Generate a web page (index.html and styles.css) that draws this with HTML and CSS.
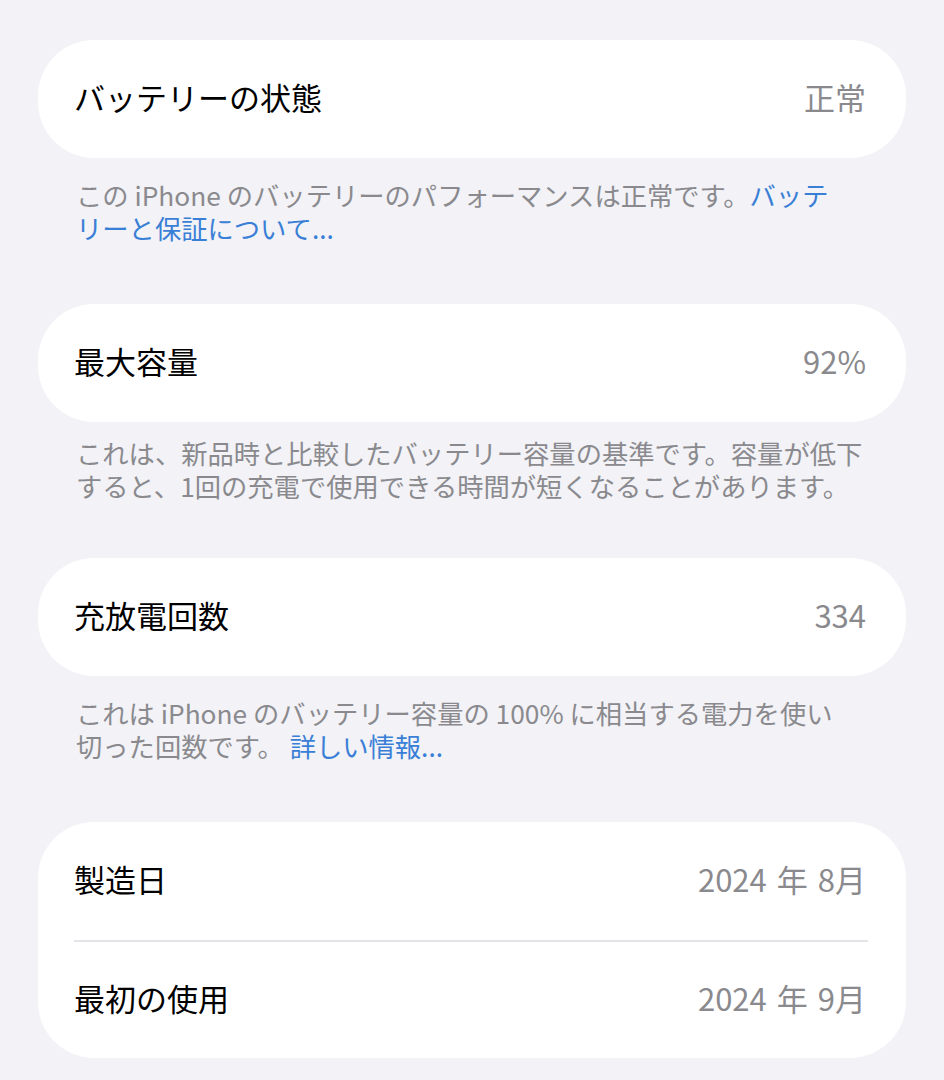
FILE: index.html
```html
<!DOCTYPE html>
<html lang="ja">
<head>
  <meta charset="UTF-8" />
  <meta name="viewport" content="width=device-width, initial-scale=1.0"/>
  <title>バッテリーの状態と充電</title>
  <link rel="stylesheet" href="styles.css">
</head>
<body>

  <main class="settings">

    <!-- Battery health -->
    <section class="group">
      <div class="card">
        <div class="row">
          <span class="label">バッテリーの状態</span>
          <span class="value">正常</span>
        </div>
      </div>
      <p class="note">この iPhone のバッテリーのパフォーマンスは正常です。<a href="#">バッテ<br>リーと保証について...</a></p>
    </section>

    <!-- Maximum capacity -->
    <section class="group group-tight">
      <div class="card">
        <div class="row">
          <span class="label">最大容量</span>
          <span class="value">92%</span>
        </div>
      </div>
      <p class="note">これは、新品時と比較したバッテリー容量の基準です。容量が低下<br>すると、1回の充電で使用できる時間が短くなることがあります。</p>
    </section>

    <!-- Cycle count -->
    <section class="group">
      <div class="card">
        <div class="row">
          <span class="label">充放電回数</span>
          <span class="value">334</span>
        </div>
      </div>
      <p class="note">これは iPhone のバッテリー容量の 100% に相当する電力を使い<br>切った回数です。 <a href="#">詳しい情報...</a></p>
    </section>

    <!-- Dates -->
    <section class="group">
      <div class="card">
        <div class="row">
          <span class="label">製造日</span>
          <span class="value">2024<span class="gap"></span>年<span class="gap"></span>8月</span>
        </div>
        <div class="row">
          <span class="label">最初の使用</span>
          <span class="value">2024<span class="gap"></span>年<span class="gap"></span>9月</span>
        </div>
      </div>
    </section>

  </main>

</body>
</html>
```

FILE: styles.css
```css
* {
  box-sizing: border-box;
  margin: 0;
  padding: 0;
}
body {
  background-color: #f2f2f7;
  font-family: "Noto Sans CJK JP", "Noto Sans", sans-serif;
  padding: 40px 38px 0;
}
.group {
  margin-bottom: 60px;
}
.card {
  background: #fff;
  border-radius: 56px;
  padding: 0 38px 0 36px;
}
.row {
  height: 118px;
  display: flex;
  align-items: center;
  justify-content: space-between;
  font-size: 31px;
  padding: 0 2px 6px 0;
}
.row + .row {
  border-top: 2px solid #e4e4e8;
}
.label {
  color: #000;
}
.value {
  color: #8a8a8e;
}
.gap {
  display: inline-block;
  width: 10px;
}
.note {
  margin-top: 20px;
  padding: 0 30px 0 38px;
  font-size: 26.3px;
  line-height: 33px;
  color: #8a8a8e;
  white-space: nowrap;
}
.note a {
  color: #3a7fd6;
  text-decoration: none;
}
.group-tight {
  margin-bottom: 56px;
}
.group-tight .note {
  margin-top: 14px;
}
```
